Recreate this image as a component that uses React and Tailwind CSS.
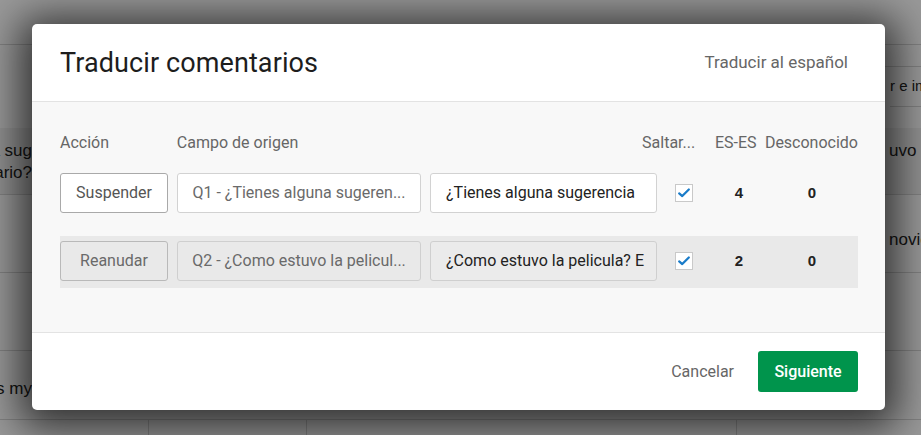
import React from "react";

const Checkbox = () => (
  <span className="flex h-[18px] w-[18px] items-center justify-center border border-[#c9c9c9] bg-white">
    <svg viewBox="0 0 16 16" className="h-[14px] w-[14px]">
      <path d="M2.5 8.5 L6 11.5 L13.5 4" fill="none" stroke="#1a7cc9" strokeWidth="2.6" strokeLinecap="round" strokeLinejoin="round" />
    </svg>
  </span>
);

const Row = ({ action, source, target, count, unknown, active }) => (
  <div className={`flex h-[52px] items-start pt-[5px] ${active ? "bg-[#e9e9e9]" : ""}`}>
    <button
      className={`h-[40px] w-[108px] rounded-[3px] border text-[16px] ${
        active ? "border-[#b9b9b9] bg-[#e9e9e9] text-[#6a6a6a]" : "border-[#a9a9a9] bg-white text-[#555]"
      }`}
    >
      {action}
    </button>
    <div
      className={`ml-[9px] flex h-[40px] w-[244px] items-center justify-center rounded-[3px] border px-3 text-[16px] text-[#6a6a6a] ${
        active ? "border-[#cfcfcf] bg-[#e9e9e9]" : "border-[#d2d2d2] bg-white"
      }`}
    >
      <span className="truncate">{source}</span>
    </div>
    <div
      className={`ml-[9px] flex h-[40px] w-[227px] items-center overflow-hidden whitespace-nowrap rounded-[3px] border pl-[15px] text-[16px] text-[#222] ${
        active ? "border-[#cfcfcf] bg-[#ebebeb]" : "border-[#d2d2d2] bg-white"
      }`}
    >
      {target}
    </div>
    <div className="flex h-[40px] w-[59px] items-center pl-[18px]">
      <Checkbox />
    </div>
    <div className="flex h-[40px] w-[46px] items-center justify-center font-['Liberation_Sans',sans-serif] text-[15px] font-bold text-[#222]">{count}</div>
    <div className="ml-[4px] flex h-[40px] w-[92px] items-center justify-center font-['Liberation_Sans',sans-serif] text-[15px] font-bold text-[#222]">{unknown}</div>
  </div>
);

export default function App() {
  return (
    <div className="relative h-[435px] w-[921px] overflow-hidden bg-white font-['Roboto',sans-serif]">
      {/* page behind the dialog */}
      <div className="flex flex-col font-['Liberation_Sans',sans-serif] text-[17px] text-[#222]">
        <div className="h-[45px] border-b border-[#d8d8d8]" />
        <div className="flex h-[22px] justify-end">
          <div className="w-[60px] border-b border-[#d8d8d8]" />
        </div>
        <div className="flex h-[40px] justify-end">
          <div className="flex w-[31px] items-center overflow-hidden whitespace-nowrap border-b border-[#d8d8d8] text-[15px]">r e im</div>
        </div>
        <div className="h-[21px]" />
        <div className="flex h-[67px] justify-between border-b border-[#d8d8d8] bg-[#f2f2f2] pt-[12px] leading-[22px]">
          <div className="flex w-[32px] flex-col items-end overflow-hidden whitespace-nowrap">
            <div>a sug</div>
            <div>ario?</div>
          </div>
          <div className="w-[34px] overflow-hidden whitespace-nowrap pl-[2px]">uvo la</div>
        </div>
        <div className="flex h-[78px] justify-end border-b border-[#d8d8d8] pt-[32px]">
          <div className="w-[34px] overflow-hidden whitespace-nowrap pl-[2px]">novie.</div>
        </div>
        <div className="h-[78px] border-b border-[#d8d8d8]" />
        <div className="flex h-[69px] items-end border-b border-[#d8d8d8] pb-[18px]">
          <div className="flex w-[32px] justify-end overflow-hidden whitespace-nowrap">es my</div>
        </div>
        <div className="flex h-[15px]">
          <div className="w-[149px] border-r border-[#d8d8d8]" />
          <div className="w-[158px] border-r border-[#d8d8d8]" />
          <div className="w-[430px] border-r border-[#d8d8d8]" />
        </div>
      </div>

      {/* overlay */}
      <div className="absolute inset-0 bg-black/[0.4]" />

      {/* dialog */}
      <div className="absolute left-[32px] top-[24px] flex h-[386px] w-[853px] flex-col overflow-hidden rounded-[5px] bg-white shadow-[0_6px_40px_12px_rgba(0,0,0,0.68)]">
        <div className="flex h-[78px] items-center justify-between border-b border-[#e3e3e3] pl-[28px] pr-[37px]">
          <h2 className="pt-[2px] text-[27px] tracking-[0.1px] text-[#1d1d1d]">Traducir comentarios</h2>
          <span className="text-[17px] text-[#666]">Traducir al español</span>
        </div>

        <div className="flex-1 border-b border-[#e3e3e3] bg-[#f8f8f8] pl-[28px] pr-[27px] pt-[31px]">
          <div className="flex h-[20px] items-center whitespace-nowrap text-[16px] text-[#666]">
            <span className="w-[117px]">Acción</span>
            <span className="w-[466px]">Campo de origen</span>
            <span className="w-[73px]">Saltar...</span>
            <span className="w-[50px]">ES-ES</span>
            <span>Desconocido</span>
          </div>
          <div className="mt-[15px] flex flex-col gap-[16px]">
            <Row action="Suspender" source="Q1 - ¿Tienes alguna sugeren..." target="¿Tienes alguna sugerencia" count="4" unknown="0" />
            <Row action="Reanudar" source="Q2 - ¿Como estuvo la pelicul..." target="¿Como estuvo la pelicula? E" count="2" unknown="0" active />
          </div>
        </div>

        <div className="flex h-[77px] items-center justify-end gap-[24px] pr-[27px]">
          <button className="text-[16px] text-[#666]">Cancelar</button>
          <button className="h-[41px] w-[100px] rounded-[3px] bg-[#00944c] text-[16px] font-medium text-white">Siguiente</button>
        </div>
      </div>
    </div>
  );
}
